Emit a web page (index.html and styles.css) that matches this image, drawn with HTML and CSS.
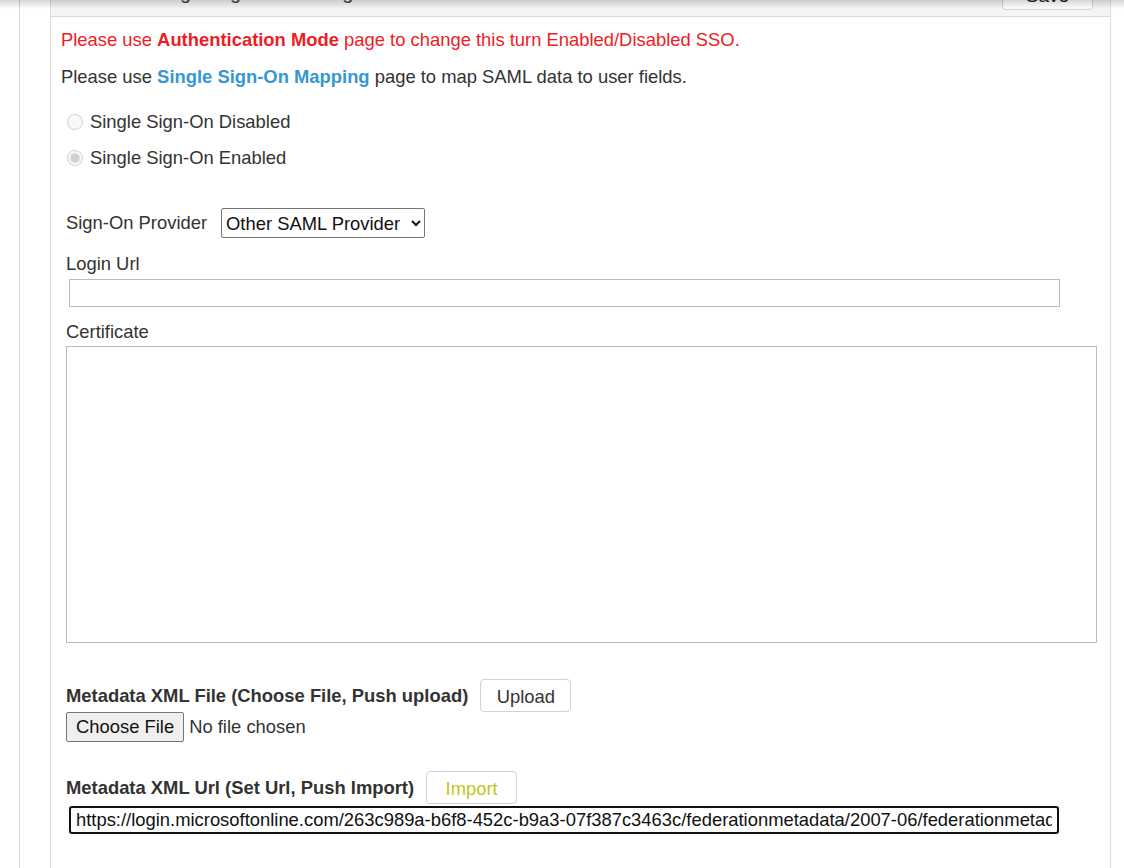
FILE: index.html
```html
<!DOCTYPE html>
<html lang="en">
<head>
    <meta charset="UTF-8">
    <title>Single Sign-On Settings</title>
    <link rel="stylesheet" href="styles.css">
</head>
<body>
<div class="top-shadow"></div>
<div class="page">
    <div class="panel">
        <div class="panel-head">
            <span class="panel-title">Single Sign-On Settings</span>
            <button class="btn btn-save">Save</button>
        </div>
        <div class="panel-body">
            <p class="note note-red">Please use <b>Authentication Mode</b> page to change this turn Enabled/Disabled SSO.</p>
            <p class="note">Please use <a href="#" class="link">Single Sign-On Mapping</a> page to map SAML data to user fields.</p>

            <label class="radio-row"><input type="radio" name="sso" disabled> Single Sign-On Disabled</label>
            <label class="radio-row"><input type="radio" name="sso" checked disabled> Single Sign-On Enabled</label>

            <div class="form">
                <div class="provider-row">
                    <span class="field-label">Sign-On Provider</span>
                    <select class="provider-select">
                        <option>Other SAML Provider</option>
                    </select>
                </div>

                <div class="field-label login-label">Login Url</div>
                <input type="text" class="text-input login-input">

                <div class="field-label cert-label">Certificate</div>
                <textarea class="cert-area"></textarea>

                <div class="meta-row meta-file">
                    <span class="meta-label">Metadata XML File (Choose File, Push upload)</span>
                    <button class="btn">Upload</button>
                </div>
                <input type="file" class="file-input">

                <div class="meta-row meta-url">
                    <span class="meta-label">Metadata XML Url (Set Url, Push Import)</span>
                    <button class="btn btn-import">Import</button>
                </div>
                <input type="text" class="text-input url-input" value="https://login.microsoftonline.com/263c989a-b6f8-452c-b9a3-07f387c3463c/federationmetadata/2007-06/federationmetadata.xml">
            </div>
        </div>
    </div>
</div>
</body>
</html>
```

FILE: styles.css
```css
html, body{
    margin: 0;
    padding: 0;
    background: #fff;
}
body{
    font-family: "Liberation Sans", Arial, sans-serif;
    font-size: 18.4px;
    color: #333;
    overflow: hidden;
}
.top-shadow{
    position: fixed;
    top: 0;
    left: 0;
    right: 0;
    height: 9px;
    background: linear-gradient(rgba(0,0,0,0.16), rgba(0,0,0,0));
    z-index: 5;
}
.page{
    margin-left: 19px;
    border-left: 1px solid #d6d6d6;
    padding-left: 30px;
    width: 1061px;
    min-height: 900px;
}
.panel{
    border: 1px solid #dcdcdc;
    border-top: none;
    min-height: 900px;
}
.panel-head{
    display: flex;
    justify-content: space-between;
    align-items: flex-start;
    margin-top: -24px;
    padding: 0 17px 0 100px;
    box-sizing: border-box;
    height: 41px;
    background: #f5f5f5;
    border-bottom: 1px solid #d9d9d9;
    overflow: hidden;
}
.panel-title{
    font-size: 20px;
    line-height: 20px;
    margin-top: 6px;
    color: #444;
}
.panel-body{
    padding: 0 10px;
}
.note{
    margin: 13px 0 0;
    line-height: 20px;
}
.note + .note{
    margin-top: 17px;
}
.note-red{
    color: #ee1c25;
}
.link{
    color: #3597d3;
    font-weight: bold;
    text-decoration: none;
}
.radio-row{
    display: flex;
    align-items: center;
    line-height: 20px;
    margin-top: 16px;
    padding-left: 6px;
}
.note + .radio-row{
    margin-top: 25px;
}
.radio-row input{
    width: 16px;
    height: 16px;
    margin: 0 7px 0 0;
}
.form{
    padding-left: 5px;
}
.provider-row{
    display: flex;
    align-items: center;
    margin-top: 40px;
}
.field-label{
    line-height: 20px;
}
.provider-select{
    margin-left: 14px;
    width: 204px;
    height: 30px;
    font-family: "Liberation Sans", Arial, sans-serif;
    font-size: 18.4px;
    color: #111;
    border: 1px solid #767676;
    border-radius: 2px;
    background: #fff;
}
.login-label{
    margin-top: 16px;
}
.text-input{
    display: block;
    box-sizing: border-box;
    font-family: "Liberation Sans", Arial, sans-serif;
}
.login-input{
    margin: 5px 0 0 3px;
    width: 991px;
    height: 28px;
    border: 1px solid #bdbdbd;
}
.cert-label{
    margin-top: 15px;
}
.cert-area{
    display: block;
    box-sizing: border-box;
    margin-top: 4px;
    width: 1031px;
    height: 297px;
    border: 1px solid #bdbdbd;
    resize: none;
}
.meta-row{
    display: flex;
    align-items: center;
    height: 33px;
}
.meta-file{
    margin-top: 36px;
}
.meta-url{
    margin-top: 29px;
}
.meta-label{
    font-weight: bold;
    line-height: 20px;
}
.btn{
    font-family: "Liberation Sans", Arial, sans-serif;
    font-size: 18.4px;
    color: #333;
    background: #fff;
    border: 1px solid #d2d2d2;
    border-radius: 4px;
    width: 91px;
    height: 33px;
    margin-left: 12px;
    padding: 2px 0 0;
}
.btn-import{
    color: #c2c520;
}
.btn-save{
    margin: 2px 0 0;
    height: 32px;
    padding-top: 4px;
    font-size: 19px;
    color: #222;
}
.file-input{
    display: block;
    font-family: "Liberation Sans", Arial, sans-serif;
    font-size: 18.4px;
    color: #333;
    height: 30px;
}
.file-input::file-selector-button{
    font-family: "Liberation Sans", Arial, sans-serif;
    font-size: 18.4px;
    height: 30px;
    padding: 0 9px;
    margin-right: 5px;
    color: #111;
    background: #efefef;
    border: 1px solid #767676;
    border-radius: 2px;
}
.url-input{
    margin: 2px 0 0 3px;
    width: 990px;
    height: 28px;
    border: 2px solid #111;
    border-radius: 3px;
    font-size: 18.4px;
    color: #111;
    padding: 0 5px;
}
```
